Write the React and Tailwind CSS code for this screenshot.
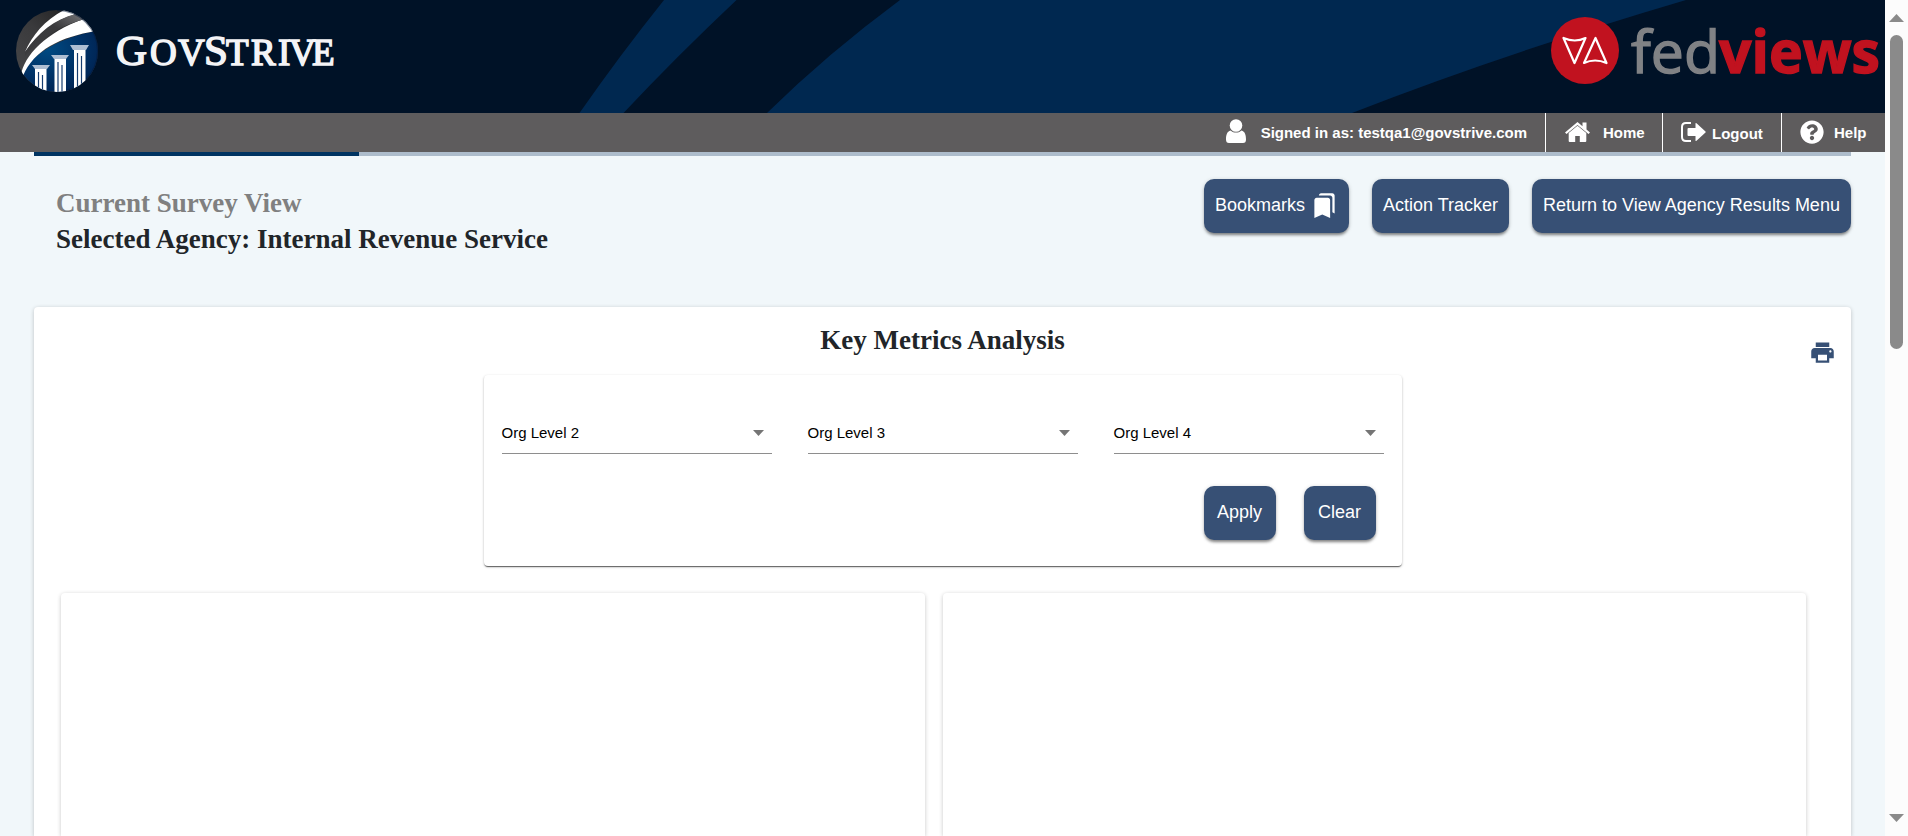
import React from 'react';
import { MdPrint, MdBookmarks } from 'react-icons/md';
import { FaQuestionCircle } from 'react-icons/fa';

function BrandMark() {
  return (
    <svg className="overflow-visible" width="340" height="100" viewBox="0 0 340 100" role="img" aria-label="GovStrive">
      <defs>
        <clipPath id="ball"><circle cx="57" cy="51" r="41" /></clipPath>
        <linearGradient id="grey" x1="0" y1="1" x2="1" y2="0">
          <stop offset="0" stopColor="#4a4a4c" /><stop offset="0.5" stopColor="#3a3a3c" /><stop offset="1" stopColor="#161616" />
        </linearGradient>
        <linearGradient id="streak" x1="0" y1="1" x2="1" y2="0">
          <stop offset="0" stopColor="#3c3c3e" /><stop offset="0.6" stopColor="#3a3a3c" /><stop offset="1" stopColor="#77777a" />
        </linearGradient>
        <radialGradient id="sea" cx="0.35" cy="0.3" r="0.75">
          <stop offset="0" stopColor="#004a82" /><stop offset="0.6" stopColor="#003064" /><stop offset="1" stopColor="#00204e" />
        </radialGradient>
      </defs>
      <g clipPath="url(#ball)">
        <rect x="16" y="10" width="82" height="82" fill="url(#grey)" />
        <path d="M22 75C32 52 62 37 100 30V95H20Z" fill="url(#sea)" />
        <path d="M21 75C24 56 46 32 84 19L96 31C60 37 34 50 23 76Z" fill="#fff" />
        <path d="M25 52C32 35 46 19 66 9L76 14C54 20 37 35 25 52Z" fill="#fff" />
        <path d="M25 52C38 33 54 19 76 14L85 19C62 25 40 38 25 56Z" fill="url(#streak)" />
        <path d="M57 10A41 41 0 0 1 98 51A41 41 0 0 1 57 92" fill="none" stroke="#00183a" strokeWidth="2" opacity="0.5" />
        <g fill="#aebed2">
          <path d="M32 65H50L47 69H35Z" /><path d="M51 55H69L66 59H54Z" /><path d="M70 45H89L86 50H73Z" />
        </g>
        <g fill="#fff">
          <rect x="35" y="69" width="11.500" height="24" /><rect x="54.500" y="59" width="11.500" height="34" /><rect x="74" y="50" width="11.500" height="43" />
        </g>
        <g stroke="#163d70" strokeWidth="1.2">
          <path d="M38.500 72V93M42.500 75V93M58 62V93M62 65V93M77.500 53V93M81.500 56V93" />
        </g>
      </g>
      <text y="64.500" fill="#f4f4f6" stroke="#f4f4f6" strokeWidth="1.5" fontFamily="'Liberation Serif', serif" fontSize="37">
        <tspan x="116" fontSize="43">G</tspan>
        <tspan x="150 178">OV</tspan>
        <tspan x="204" fontSize="43">S</tspan>
        <tspan x="226 251 278 289 312">TRIVE</tspan>
      </text>
    </svg>
  );
}

function FedviewsLogo() {
  return (
    <svg className="overflow-visible" width="340" height="100" viewBox="1545 0 340 100" role="img" aria-label="fedviews">
      <ellipse cx="1585" cy="50.500" rx="34" ry="33.500" fill="#c1121f" />
      <path d="M1563.500 38L1574.500 63L1585.500 38Q1575 43 1563.500 38Z" fill="none" stroke="#fff" strokeWidth="2.200" strokeLinejoin="round" />
      <path d="M1595.500 38L1584 63Q1595 58 1606.500 63Z" fill="none" stroke="#fff" strokeWidth="2.200" strokeLinejoin="round" />
      <g fontFamily="'Open Sans', sans-serif" fontSize="59">
        <text x="1631" y="72.500" fill="#808285" stroke="#808285" strokeWidth="1.400" textLength="89" lengthAdjust="spacingAndGlyphs">fed</text>
        <text x="1719" y="72.500" fill="#c1121f" stroke="#c1121f" strokeWidth="1.400" fontWeight="700" textLength="161" lengthAdjust="spacingAndGlyphs">views</text>
      </g>
    </svg>
  );
}

function UserIcon() {
  return (
    <svg className="mb-[4px] shrink-0" width="20" height="24" viewBox="0 0 20 24" fill="#fff">
      <path d="M4.500 11.500C1 12.500 0 16 0 20.500Q0 24 3 24H17Q20 24 20 20.500C20 16 19 12.500 15.500 11.500C13.500 13.200 12 13.500 10 13.500S6.500 13.200 4.500 11.500Z" />
      <circle cx="10" cy="6.500" r="6.300" />
    </svg>
  );
}

function HomeIcon() {
  return (
    <svg className="mb-[2px] shrink-0" width="25" height="20" viewBox="0 0 25 20" fill="#fff">
      <path d="M12.500 0L0 10.500L1.500 12L12.500 3L23.500 12L25 10.500L21.500 7.500V0.500H17.500V4.200Z" />
      <path d="M12.500 3.700L3.700 11V19Q3.700 20 4.700 20H10.200V14H14.800V20H20.300Q21.300 20 21.300 19V11Z" />
    </svg>
  );
}

function LogoutIcon() {
  return (
    <svg className="mb-[2px] shrink-0" width="25" height="20" viewBox="0 0 25 20" fill="#fff">
      <path d="M10 1H5Q1 1 1 5V15Q1 19 5 19H10" fill="none" stroke="#fff" strokeWidth="2" />
      <path d="M7.500 6H14.500V1.500Q14.500 0.500 15.500 1.200L24.500 9.500Q25 10 24.500 10.500L15.500 18.800Q14.500 19.500 14.500 18.500V14H7.500Q6.500 14 6.500 13V7Q6.500 6 7.500 6Z" />
    </svg>
  );
}

function ActionButton({ children, className }) {
  return (
    <button className={`flex h-[54px] shrink-0 items-center justify-center rounded-[10px] bg-[#375075] pb-px text-[18px] text-white shadow-[0_3px_3px_-1px_rgba(0,0,0,0.4),0_1px_4px_rgba(0,0,0,0.2)] whitespace-nowrap ${className}`}>
      {children}
    </button>
  );
}

function OrgSelect({ label }) {
  return (
    <div className="flex h-[38px] w-[270px] items-start justify-between border-b border-[#8e8e8e] pr-[8px]">
      <span className="text-[15px] leading-[34px] text-black">{label}</span>
      <svg className="mt-[14px]" width="11" height="6" viewBox="0 0 11 6"><path d="M0 0H11L5.500 6Z" fill="#757575" /></svg>
    </div>
  );
}

const cardShadow = 'shadow-[0_1px_4px_rgba(0,0,0,0.22)]';

export default function App() {
  return (
    <div className="flex h-[836px] w-[1908px] overflow-hidden bg-[#f1f7fa] font-['Liberation_Sans',Arial,sans-serif]">
      <div className="flex w-[1885px] shrink-0 flex-col">
        <header className="relative flex h-[113px] shrink-0 justify-between bg-[#001227]">
          <svg className="absolute inset-0" width="1885" height="113" viewBox="0 0 1885 113" fill="#002850">
            <path d="M664 0H736.500Q676 57 623.500 113H579.500Q620 55 664 0Z" />
            <path d="M900 0H1686Q1500 55 1352 113H767Q827 54 900 0Z" />
          </svg>
          <div className="relative"><BrandMark /></div>
          <div className="relative"><FedviewsLogo /></div>
        </header>

        <nav className="flex h-[39px] shrink-0 justify-end bg-[#5e5c5d] text-[15px] font-bold text-white">
          <div className="flex items-center pr-[18px]">
            <UserIcon />
            <span className="ml-[15px] pt-px">Signed in as: testqa1@govstrive.com</span>
          </div>
          <div className="flex w-[117px] items-center border-l border-white pl-[19px]">
            <HomeIcon /><span className="ml-[13px] pt-px">Home</span>
          </div>
          <div className="flex w-[119px] items-center border-l border-white pl-[18px]">
            <LogoutIcon /><span className="ml-[6px] pt-[3px]">Logout</span>
          </div>
          <div className="flex w-[104px] items-center border-l border-white pl-[18px]">
            <FaQuestionCircle size={24} className="mb-[2px]" /><span className="ml-[10px] pt-px">Help</span>
          </div>
        </nav>

        <main className="flex flex-1 flex-col px-[34px]">
          <div className="flex h-[4px] shrink-0 bg-[#adbccb]"><div className="w-[325px] bg-[#003462]" /></div>

          <div className="flex h-[151px] shrink-0 items-start justify-between pt-[23px]">
            <div className="pl-[22px] pt-[6px] font-['Liberation_Serif',serif] text-[27px] leading-[36px] font-bold">
              <h2 className="text-[#808080]">Current Survey View</h2>
              <h2 className="text-[#212529]">Selected Agency: Internal Revenue Service</h2>
            </div>
            <div className="flex gap-[23px]">
              <ActionButton className="w-[145px] gap-[6px]">
                Bookmarks
                <MdBookmarks size={27} />
              </ActionButton>
              <ActionButton className="w-[137px]">Action Tracker</ActionButton>
              <ActionButton className="w-[319px]">Return to View Agency Results Menu</ActionButton>
            </div>
          </div>

          <section className={`relative flex flex-1 flex-col items-center rounded-t-[4px] bg-white ${cardShadow}`}>
            <h1 className="pt-[15px] font-['Liberation_Serif',serif] text-[27px] leading-[36px] font-bold text-[#212529]">Key Metrics Analysis</h1>
            <div className="absolute top-[32px] right-[15px]"><MdPrint size={27} color="#375075" /></div>

            <div className="mt-[17px] flex h-[191px] w-[918px] shrink-0 flex-col rounded-[4px] bg-white px-[18px] pt-[41px] shadow-[0_2px_1px_-1px_rgba(0,0,0,0.4),0_1px_1px_rgba(0,0,0,0.25),0_1px_3px_rgba(0,0,0,0.2)]">
              <div className="flex justify-between">
                <OrgSelect label="Org Level 2" />
                <OrgSelect label="Org Level 3" />
                <OrgSelect label="Org Level 4" />
              </div>
              <div className="flex justify-end gap-[28px] pt-[32px] pr-[8px]">
                <ActionButton className="w-[72px]">Apply</ActionButton>
                <ActionButton className="w-[72px]">Clear</ActionButton>
              </div>
            </div>

            <div className="mt-[27px] flex w-full flex-1 justify-between pr-[45px] pl-[27px]">
              <div className={`w-[864px] rounded-t-[4px] bg-white ${cardShadow}`} />
              <div className={`w-[863px] rounded-t-[4px] bg-white ${cardShadow}`} />
            </div>
          </section>
        </main>
      </div>

      <div className="flex w-[23px] flex-col items-center bg-[#fcfcfc] pt-[14px] pb-[14px]">
        <svg width="15" height="8" viewBox="0 0 15 8"><path d="M7.500 0L15 8H0Z" fill="#8a8a8a" /></svg>
        <div className="mt-[13px] h-[314px] w-[13px] rounded-full bg-[#8a8a8a]" />
        <svg className="mt-auto" width="15" height="8" viewBox="0 0 15 8"><path d="M0 0H15L7.500 8Z" fill="#8a8a8a" /></svg>
      </div>
    </div>
  );
}
